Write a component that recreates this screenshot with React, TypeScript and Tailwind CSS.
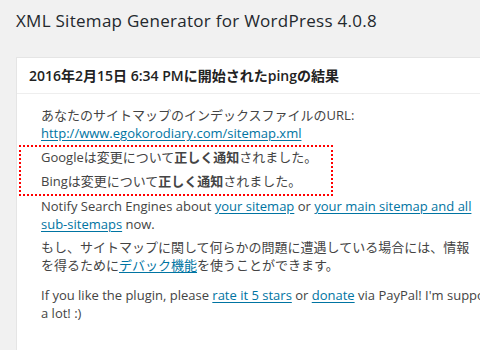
export default function App() {
  const link = "text-[#0074a2] underline underline-offset-2";
  return (
    <div
      className="h-[350px] w-[480px] overflow-hidden bg-[#f1f1f1] pl-4 pt-[7px] text-[#444]"
      style={{ fontFamily: '"Open Sans", "Noto Sans CJK JP", sans-serif' }}
    >
      <h2 className="text-[17px] leading-[28px] tracking-[0.28px] text-[#23282d]">
        XML Sitemap Generator for WordPress 4.0.8
      </h2>

      <div className="mt-[22px] min-h-[400px] w-[600px] border border-[#e5e5e5] bg-white">
        <h3 className="border-b border-[#eee] px-3 py-[8px] text-[14px] font-semibold leading-[19px] text-[#222]">
          2016年2月15日 6:34 PMに開始されたpingの結果
        </h3>

        <div className="pt-3 text-[13px] leading-[18px]">
          <p className="pl-[24px]">
            あなたのサイトマップのインデックスファイルのURL:
            <br />
            <a className={link}>http://www.egokorodiary.com/sitemap.xml</a>
          </p>

          {/* red dotted annotation box */}
          <div className="ml-[2px] mt-[3px] w-[314px] border-2 border-dotted border-[#f00] pb-[4px] pl-[20px] pt-[1px]">
            <p>
              Googleは変更について<b>正しく通知</b>されました。
            </p>
            <p className="mt-[6px]">
              Bingは変更について<b>正しく通知</b>されました。
            </p>
          </div>

          <p className="mt-[1px] pl-[24px]">
            Notify Search Engines about <a className={link}>your sitemap</a> or{" "}
            <a className={link}>your main sitemap and all</a>
            <br />
            <a className={link}>sub-sitemaps</a> now.
          </p>

          <p className="mt-[5px] pl-[24px]">
            もし、サイトマップに関して何らかの問題に遭遇している場合には、情報
            <br />
            を得るために<a className={link}>デバック機能</a>を使うことができます。
          </p>

          <p className="mt-[12px] whitespace-nowrap pl-[24px]">
            If you like the plugin, please <a className={link}>rate it 5 stars</a> or{" "}
            <a className={link}>donate</a> via PayPal! I'm supporting this plugin
            since over 9 years! Thanks
            <br />a lot! :)
          </p>
        </div>
      </div>
    </div>
  );
}
